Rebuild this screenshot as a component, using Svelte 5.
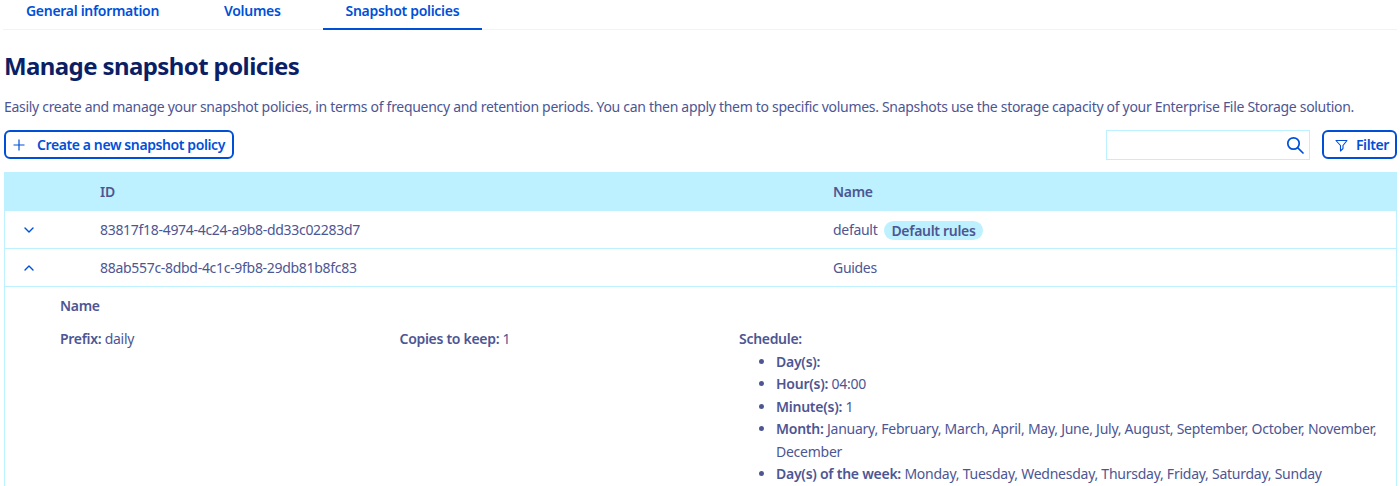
<script>
  const tabs = ['General information', 'Volumes', 'Snapshot policies'];
  const rows = [
    { id: '83817f18-4974-4c24-a9b8-dd33c02283d7', name: 'default', open: false, badge: 'Default rules' },
    { id: '88ab557c-8dbd-4c1c-9fb8-29db81b8fc83', name: 'Guides', open: true }
  ];
  const schedule = [
    ['Day(s):', ''],
    ['Hour(s):', '04:00'],
    ['Minute(s):', '1'],
    ['Month:', 'January, February, March, April, May, June, July, August, September, October, November, December'],
    ['Day(s) of the week:', 'Monday, Tuesday, Wednesday, Thursday, Friday, Saturday, Sunday']
  ];
</script>

<div class="page">
  <nav class="tabs">
    {#each tabs as tab, i}
      <button class="tab" class:active={i === 2}>{tab}</button>
    {/each}
  </nav>

  <h1>Manage snapshot policies</h1>
  <p class="intro">Easily create and manage your snapshot policies, in terms of frequency and retention periods. You can then apply them to specific volumes. Snapshots use the storage capacity of your Enterprise File Storage solution.</p>

  <div class="toolbar">
    <button class="btn create">
      <svg width="12" height="12" viewBox="0 0 12 12"><path d="M6 .5v11M.5 6h11" fill="none" stroke="currentColor" stroke-width="1.2" /></svg>
      Create a new snapshot policy
    </button>
    <div class="search">
      <svg width="18" height="18" viewBox="0 0 18 18" fill="none" stroke="currentColor" stroke-width="1.7"><circle cx="7.5" cy="7.5" r="5.7" /><path d="M11.8 11.8 17 17" stroke-linecap="round" /></svg>
    </div>
    <button class="btn filter">
      <svg width="13" height="13" viewBox="0 0 13 13" fill="none" stroke="currentColor" stroke-width="1.1" stroke-linejoin="round"><path d="M1 1.5h11L8 6.5v3L5.5 12V6.5z" /></svg>
      Filter
    </button>
  </div>

  <div class="table">
    <div class="row head">
      <span></span>
      <span>ID</span>
      <span>Name</span>
    </div>
    {#each rows as row}
      <div class="row">
        <span class="chev">
          <svg width="10" height="6" viewBox="0 0 10 6" fill="none" stroke="currentColor" stroke-width="1.4" stroke-linecap="round" stroke-linejoin="round">
            <path d={row.open ? 'M1 5l4-4 4 4' : 'M1 1l4 4 4-4'} />
          </svg>
        </span>
        <span>{row.id}</span>
        <span class="name">
          {row.name}
          {#if row.badge}<span class="badge">{row.badge}</span>{/if}
        </span>
      </div>
    {/each}
    <div class="detail">
      <h2>Name</h2>
      <div class="cols">
        <div><b>Prefix:</b> daily</div>
        <div><b>Copies to keep:</b> 1</div>
        <div>
          <b>Schedule:</b>
          <ul>
            {#each schedule as [label, value]}
              <li><b>{label}</b> {value}</li>
            {/each}
          </ul>
        </div>
      </div>
    </div>
  </div>
</div>

<style>
  :global(body) {
    background: #fff;
    overflow: hidden;
  }

  .page {
    box-sizing: border-box;
    width: 1400px;
    height: 486px;
    padding: 0 3px 0 4px;
    overflow: hidden;
    font-family: 'Noto Sans', sans-serif;
    font-size: 14px;
    line-height: 22.5px;
    letter-spacing: -0.3px;
    color: #4d5693;
  }

  .tabs {
    display: flex;
    gap: 19px;
    height: 30px;
    margin-left: -1px;
    border-bottom: 1px solid #e6f8ff;
    box-sizing: border-box;
  }

  .tab {
    height: 30px;
    padding: 0 23px 9px;
    border: 0;
    border-bottom: 2px solid transparent;
    background: none;
    font: inherit;
    font-weight: 600;
    letter-spacing: inherit;
    color: #0050d7;
  }

  .tab.active {
    border-bottom-color: #0050d7;
  }

  h1 {
    margin: 18px 0 0;
    font-size: 24px;
    line-height: 36px;
    font-weight: 700;
    letter-spacing: -0.6px;
    color: #0b1f66;
  }

  .intro {
    margin: 12px 0 0;
    white-space: nowrap;
  }

  .toolbar {
    display: flex;
    align-items: center;
    gap: 12px;
    margin-top: 11px;
  }

  .btn {
    display: flex;
    align-items: center;
    box-sizing: border-box;
    height: 29px;
    padding-top: 2px;
    border: 2px solid #0050d7;
    border-radius: 6px;
    background: #fff;
    font: inherit;
    font-weight: 600;
    letter-spacing: -0.4px;
    color: #0050d7;
  }

  .create {
    gap: 12px;
    width: 230px;
    padding-left: 7px;
    white-space: nowrap;
  }

  .filter {
    gap: 8px;
    width: 75px;
    padding-left: 11px;
  }

  .search {
    display: flex;
    align-items: center;
    justify-content: flex-end;
    box-sizing: border-box;
    width: 204px;
    height: 30px;
    margin-left: auto;
    padding-right: 5px;
    border: 1px solid #bef1ff;
    color: #0050d7;
  }

  .table {
    margin-top: 12px;
    border-left: 1px solid #bef1ff;
    border-right: 1px solid #bef1ff;
  }

  .row {
    display: grid;
    grid-template-columns: 95px 733px 1fr;
    align-items: center;
    height: 38px;
    padding-top: 2px;
    border-bottom: 1px solid #bef1ff;
    box-sizing: border-box;
  }

  .head {
    height: 39px;
    margin: 0 -1px;
    padding-left: 1px;
    border-bottom: 0;
    background: #bef1ff;
    font-weight: 600;
  }

  .chev {
    display: flex;
    padding-left: 19px;
    color: #0050d7;
  }

  .name {
    display: flex;
    align-items: center;
    gap: 7px;
  }

  .badge {
    padding: 0 7px;
    border-radius: 10px;
    background: #bef1ff;
    font-weight: 600;
    line-height: 19px;
  }

  .detail {
    padding: 8px 0 0 55px;
  }

  h2 {
    margin: 0;
    font: inherit;
    font-weight: 600;
  }

  .cols {
    display: grid;
    grid-template-columns: 339.5px 339.5px 1fr;
    margin-top: 11px;
  }

  b {
    font-weight: 600;
  }

  ul {
    margin: 0;
    padding-left: 37px;
    line-height: 22.6px;
    letter-spacing: -0.25px;
  }
</style>
